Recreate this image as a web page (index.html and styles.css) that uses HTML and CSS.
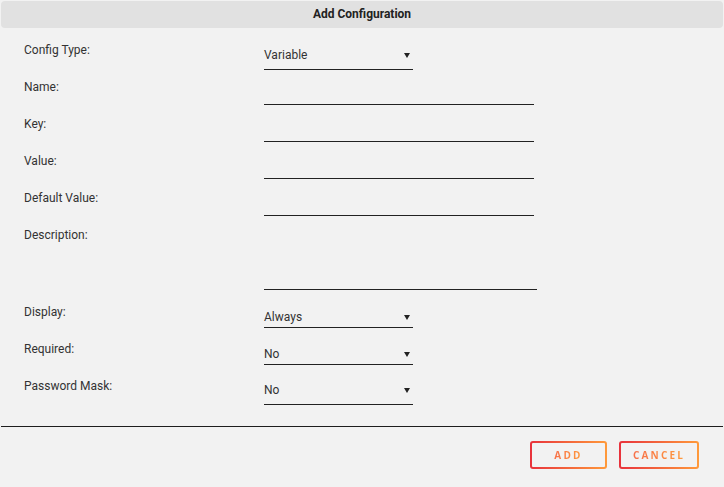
FILE: index.html
```html
<!DOCTYPE html>
<html lang="en">
<head>
<meta charset="utf-8">
<title>Add Configuration</title>
<link rel="stylesheet" href="styles.css">
</head>
<body>
<div class="dialog">
  <div class="header">Add Configuration</div>
  <form class="form">
    <div class="row">
      <label class="label">Config Type:</label>
      <div class="select select-first"><span>Variable</span><i class="caret"></i></div>
    </div>
    <div class="row">
      <label class="label">Name:</label>
      <div class="input"></div>
    </div>
    <div class="row">
      <label class="label">Key:</label>
      <div class="input"></div>
    </div>
    <div class="row">
      <label class="label">Value:</label>
      <div class="input"></div>
    </div>
    <div class="row">
      <label class="label">Default Value:</label>
      <div class="input"></div>
    </div>
    <div class="row row-tall">
      <label class="label">Description:</label>
      <div class="textarea"></div>
    </div>
    <div class="row">
      <label class="label">Display:</label>
      <div class="select select-compact"><span>Always</span><i class="caret"></i></div>
    </div>
    <div class="row">
      <label class="label">Required:</label>
      <div class="select select-compact"><span>No</span><i class="caret"></i></div>
    </div>
    <div class="row">
      <label class="label">Password Mask:</label>
      <div class="select"><span>No</span><i class="caret"></i></div>
    </div>
  </form>
  <div class="divider"></div>
  <div class="footer">
    <button class="btn btn-add" type="button"><span>ADD</span></button>
    <button class="btn btn-cancel" type="button"><span>CANCEL</span></button>
  </div>
</div>
</body>
</html>
```
FILE: styles.css
```css
html, body {
  margin: 0;
  padding: 0;
  background: #f2f2f2;
}
body {
  font-family: Roboto, "Liberation Sans", sans-serif;
  font-size: 12px;
  color: #333;
}
.dialog {
  padding: 1px;
  height: 485px;
}
.header {
  height: 27px;
  line-height: 27px;
  background: #e1e1e1;
  border-radius: 4px;
  text-align: center;
  font-weight: bold;
  color: #222;
}
.form {
  margin: 16px 0 0;
  padding-left: 23px;
  display: flex;
  flex-direction: column;
}
.row {
  display: grid;
  grid-template-columns: 240px auto;
  height: 37px;
  align-items: start;
}
.row-tall {
  height: 77px;
}
.label {
  line-height: 13px;
  color: #333;
}
.input {
  width: 270px;
  height: 23px;
  border-bottom: 1px solid #222;
}
.textarea {
  width: 273px;
  height: 60px;
  border-bottom: 1px solid #222;
}
.select {
  width: 149px;
  height: 21px;
  border-bottom: 1px solid #222;
  display: flex;
  justify-content: space-between;
  align-items: flex-start;
  padding-top: 3px;
  line-height: 14px;
  color: #333;
  box-sizing: content-box;
}
.select-first {
  height: 21px;
  padding-top: 4px;
}
.select-compact {
  height: 17px;
  padding-top: 4px;
}
.caret {
  width: 0;
  height: 0;
  border-left: 3px solid transparent;
  border-right: 3px solid transparent;
  border-top: 5px solid #222;
  margin: 5px 3px 0 0;
}
.divider {
  margin-top: 9px;
  height: 1px;
  background: #1e1e1e;
}
.footer {
  display: flex;
  justify-content: flex-end;
  gap: 12px;
  padding: 14px 24px 0 0;
}
.btn {
  height: 28px;
  border: 2px solid transparent;
  border-radius: 3px;
  background:
    linear-gradient(#f2f2f2, #f2f2f2) padding-box,
    linear-gradient(90deg, #e8323c, #ff9a3a) border-box;
  font-family: "Open Sans", Roboto, sans-serif;
  font-weight: 700;
  font-size: 10px;
  letter-spacing: 2.2px;
  padding: 0;
  cursor: pointer;
}
.btn span {
  background: linear-gradient(90deg, #f7704a, #ff9a3c);
  -webkit-background-clip: text;
  background-clip: text;
  color: transparent;
}
.btn-add {
  width: 77px;
}
.btn-cancel {
  width: 80px;
}
```
